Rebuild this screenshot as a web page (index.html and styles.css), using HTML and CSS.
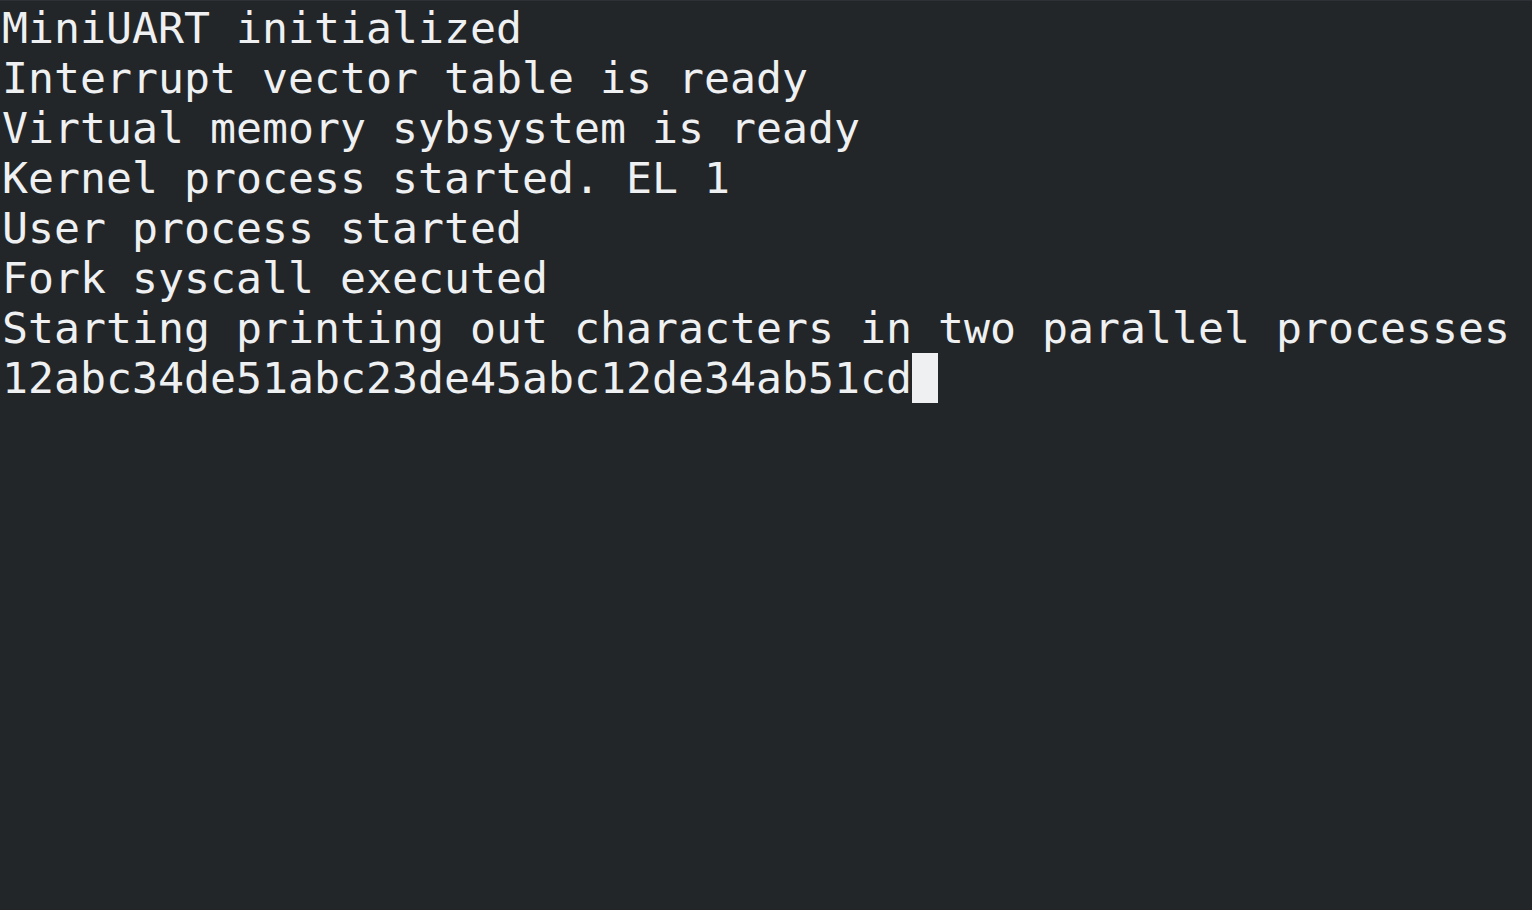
FILE: index.html
```html
<!DOCTYPE html>
<html>
<head>
<meta charset="utf-8">
<link rel="stylesheet" href="styles.css">
</head>
<body>
<div class="term">
<div class="line">MiniUART initialized</div>
<div class="line">Interrupt vector table is ready</div>
<div class="line">Virtual memory sybsystem is ready</div>
<div class="line">Kernel process started. EL 1</div>
<div class="line">User process started</div>
<div class="line">Fork syscall executed</div>
<div class="line">Starting printing out characters in two parallel processes</div>
<div class="line">12abc34de51abc23de45abc12de34ab51cd<span class="cursor"></span></div>
</div>
</body>
</html>
```
FILE: styles.css
```css
html, body {
  margin: 0;
  padding: 0;
  background: #232629;
  height: 100%;
  overflow: hidden;
}
.term {
  box-sizing: border-box;
  height: 910px;
  border-top: 1px solid #2e3236;
  padding: 2px 0 0 2px;
  font-family: "DejaVu Sans Mono", monospace;
  font-size: 43.19px;
  line-height: 50px;
  color: #eff0f1;
}
.line {
  height: 50px;
  white-space: pre;
}
.cursor {
  display: inline-block;
  width: 26px;
  height: 50px;
  background: #eff0f1;
  vertical-align: top;
}
```
